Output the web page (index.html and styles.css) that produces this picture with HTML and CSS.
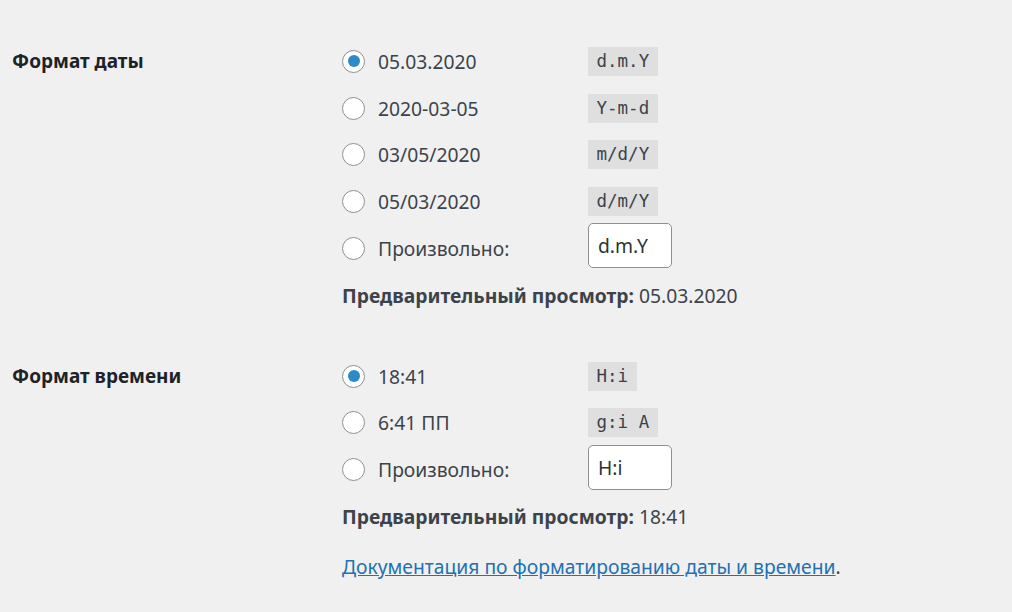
FILE: index.html
```html
<!DOCTYPE html>
<html lang="ru">
<head>
<meta charset="utf-8">
<link rel="stylesheet" href="styles.css">
</head>
<body>
<div class="settings">
  <div class="row">
    <div class="th">Формат даты</div>
    <div class="td">
      <label class="opt"><span class="radio checked"></span><span class="txt">05.03.2020</span><code>d.m.Y</code></label>
      <label class="opt"><span class="radio"></span><span class="txt">2020-03-05</span><code>Y-m-d</code></label>
      <label class="opt"><span class="radio"></span><span class="txt">03/05/2020</span><code>m/d/Y</code></label>
      <label class="opt"><span class="radio"></span><span class="txt">05/03/2020</span><code>d/m/Y</code></label>
      <label class="opt"><span class="radio"></span><span class="txt">Произвольно:</span><span class="input">d.m.Y</span></label>
      <p class="preview"><strong>Предварительный просмотр:</strong> 05.03.2020</p>
    </div>
  </div>
  <div class="row row2">
    <div class="th">Формат времени</div>
    <div class="td">
      <label class="opt"><span class="radio checked"></span><span class="txt">18:41</span><code>H:i</code></label>
      <label class="opt"><span class="radio"></span><span class="txt">6:41 ПП</span><code>g:i A</code></label>
      <label class="opt"><span class="radio"></span><span class="txt">Произвольно:</span><span class="input">H:i</span></label>
      <p class="preview"><strong>Предварительный просмотр:</strong> 18:41</p>
      <p class="doc"><a href="#">Документация по форматированию даты и времени</a>.</p>
    </div>
  </div>
</div>
</body>
</html>
```
FILE: styles.css
```css
html, body {
  margin: 0;
  padding: 0;
  background: #f0f0f1;
}
body {
  font-family: "Noto Sans", "Open Sans", sans-serif;
  font-size: 19.3px;
  color: #3c434a;
  width: 1012px;
  height: 612px;
  overflow: hidden;
}
.settings {
  padding: 38px 0 0 12px;
}
.row {
  display: flex;
}
.row2 {
  margin-top: 34px;
}
.th {
  width: 330px;
  font-size: 19px;
  font-weight: 700;
  color: #1d2327;
  line-height: 47px;
}
.td {
  display: flex;
  flex-direction: column;
}
.opt {
  display: flex;
  align-items: center;
  height: 46.75px;
}
.radio {
  box-sizing: border-box;
  width: 23px;
  height: 23px;
  border: 1px solid #8c8f94;
  border-radius: 50%;
  background: #fff;
  margin-right: 13px;
  display: flex;
  align-items: center;
  justify-content: center;
  flex: none;
}
.radio.checked::after {
  content: "";
  width: 12px;
  height: 12px;
  border-radius: 50%;
  background: #2c8ac8;
}
.txt {
  width: 210px;
}
code {
  font-family: "DejaVu Sans Mono", "Liberation Mono", monospace;
  font-size: 17.5px;
  background: #dfdfe0;
  color: #3c434a;
  padding: 0 8.5px;
  height: 29px;
  line-height: 29px;
}
.input {
  box-sizing: border-box;
  width: 84px;
  height: 45px;
  line-height: 43px;
  border: 1px solid #8c8f94;
  border-radius: 5px;
  background: #fff;
  padding: 0 9px;
  color: #2c3338;
  margin-top: -5px;
}
.preview {
  margin: 0;
  line-height: 47px;
}
.preview strong {
  color: #3c434a;
}
.doc {
  margin: 3px 0 0;
  line-height: 47px;
}
.doc a {
  color: #2271b1;
  text-decoration: underline;
}
```
